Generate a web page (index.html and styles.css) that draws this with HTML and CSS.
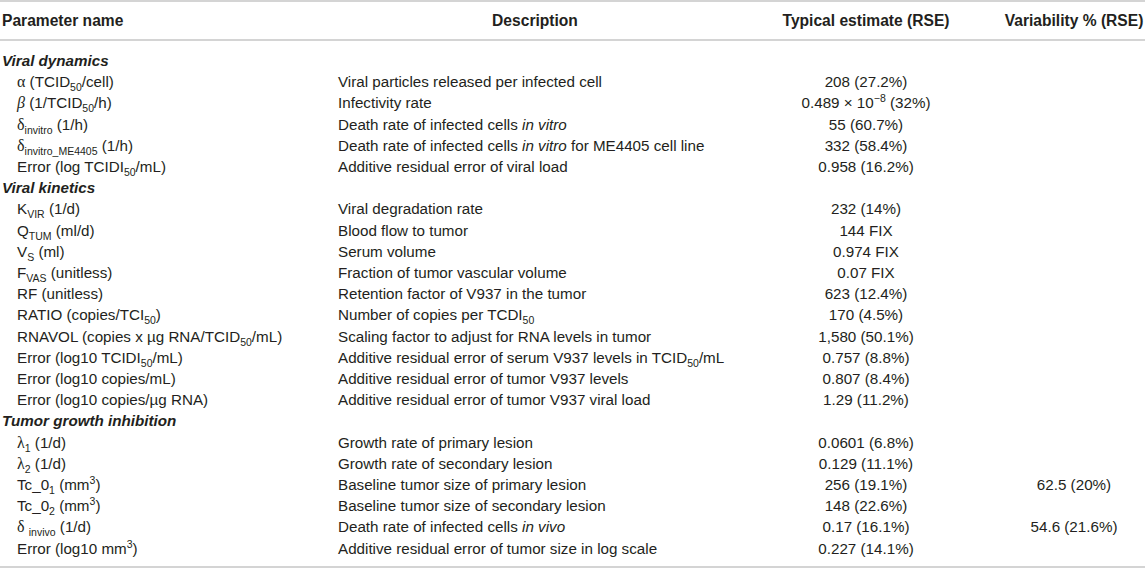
FILE: index.html
```html
<!DOCTYPE html>
<html lang="en">
<head>
    <meta charset="UTF-8">
    <title>Model parameter estimates</title>
    <link rel="stylesheet" href="styles.css">
</head>
<body>
    <table class="params">
        <colgroup>
            <col class="c-name">
            <col class="c-desc">
            <col class="c-est">
            <col class="c-var">
        </colgroup>
        <thead>
            <tr>
                <th class="h-name">Parameter name</th>
                <th class="h-desc">Description</th>
                <th class="h-est">Typical estimate (RSE)</th>
                <th class="h-var">Variability % (RSE)</th>
            </tr>
        </thead>
        <tbody>
            <tr class="gap"><td colspan="4"></td></tr>
            <tr class="section"><td colspan="4">Viral dynamics</td></tr>
            <tr>
                <td class="name"><span class="gr">α</span> (TCID<sub>50</sub>/cell)</td>
                <td>Viral particles released per infected cell</td>
                <td class="est">208 (27.2%)</td>
                <td class="var"></td>
            </tr>
            <tr>
                <td class="name"><i class="gr">β</i> (1/TCID<sub>50</sub>/h)</td>
                <td>Infectivity rate</td>
                <td class="est">0.489 × 10<sup>−8</sup> (32%)</td>
                <td class="var"></td>
            </tr>
            <tr>
                <td class="name"><span class="gr">δ</span><sub>invitro</sub> (1/h)</td>
                <td>Death rate of infected cells <i>in vitro</i></td>
                <td class="est">55 (60.7%)</td>
                <td class="var"></td>
            </tr>
            <tr>
                <td class="name"><span class="gr">δ</span><sub>invitro_ME4405</sub> (1/h)</td>
                <td>Death rate of infected cells <i>in vitro</i> for ME4405 cell line</td>
                <td class="est">332 (58.4%)</td>
                <td class="var"></td>
            </tr>
            <tr>
                <td class="name">Error (log TCIDI<sub>50</sub>/mL)</td>
                <td>Additive residual error of viral load</td>
                <td class="est">0.958 (16.2%)</td>
                <td class="var"></td>
            </tr>
            <tr class="section"><td colspan="4">Viral kinetics</td></tr>
            <tr>
                <td class="name">K<sub>VIR</sub> (1/d)</td>
                <td>Viral degradation rate</td>
                <td class="est">232 (14%)</td>
                <td class="var"></td>
            </tr>
            <tr>
                <td class="name">Q<sub>TUM</sub> (ml/d)</td>
                <td>Blood flow to tumor</td>
                <td class="est">144 FIX</td>
                <td class="var"></td>
            </tr>
            <tr>
                <td class="name">V<sub>S</sub> (ml)</td>
                <td>Serum volume</td>
                <td class="est">0.974 FIX</td>
                <td class="var"></td>
            </tr>
            <tr>
                <td class="name">F<sub>VAS</sub> (unitless)</td>
                <td>Fraction of tumor vascular volume</td>
                <td class="est">0.07 FIX</td>
                <td class="var"></td>
            </tr>
            <tr>
                <td class="name">RF (unitless)</td>
                <td>Retention factor of V937 in the tumor</td>
                <td class="est">623 (12.4%)</td>
                <td class="var"></td>
            </tr>
            <tr>
                <td class="name">RATIO (copies/TCI<sub>50</sub>)</td>
                <td>Number of copies per TCDI<sub>50</sub></td>
                <td class="est">170 (4.5%)</td>
                <td class="var"></td>
            </tr>
            <tr>
                <td class="name">RNAVOL (copies x µg RNA/TCID<sub>50</sub>/mL)</td>
                <td>Scaling factor to adjust for RNA levels in tumor</td>
                <td class="est">1,580 (50.1%)</td>
                <td class="var"></td>
            </tr>
            <tr>
                <td class="name">Error (log10 TCIDI<sub>50</sub>/mL)</td>
                <td>Additive residual error of serum V937 levels in TCID<sub>50</sub>/mL</td>
                <td class="est">0.757 (8.8%)</td>
                <td class="var"></td>
            </tr>
            <tr>
                <td class="name">Error (log10 copies/mL)</td>
                <td>Additive residual error of tumor V937 levels</td>
                <td class="est">0.807 (8.4%)</td>
                <td class="var"></td>
            </tr>
            <tr>
                <td class="name">Error (log10 copies/µg RNA)</td>
                <td>Additive residual error of tumor V937 viral load</td>
                <td class="est">1.29 (11.2%)</td>
                <td class="var"></td>
            </tr>
            <tr class="section"><td colspan="4">Tumor growth inhibition</td></tr>
            <tr>
                <td class="name"><span class="gr">λ</span><sub>1</sub> (1/d)</td>
                <td>Growth rate of primary lesion</td>
                <td class="est">0.0601 (6.8%)</td>
                <td class="var"></td>
            </tr>
            <tr>
                <td class="name"><span class="gr">λ</span><sub>2</sub> (1/d)</td>
                <td>Growth rate of secondary lesion</td>
                <td class="est">0.129 (11.1%)</td>
                <td class="var"></td>
            </tr>
            <tr>
                <td class="name">Tc_0<sub>1</sub> (mm<sup>3</sup>)</td>
                <td>Baseline tumor size of primary lesion</td>
                <td class="est">256 (19.1%)</td>
                <td class="var">62.5 (20%)</td>
            </tr>
            <tr>
                <td class="name">Tc_0<sub>2</sub> (mm<sup>3</sup>)</td>
                <td>Baseline tumor size of secondary lesion</td>
                <td class="est">148 (22.6%)</td>
                <td class="var"></td>
            </tr>
            <tr>
                <td class="name"><span class="gr">δ</span> <sub>invivo</sub> (1/d)</td>
                <td>Death rate of infected cells <i>in vivo</i></td>
                <td class="est">0.17 (16.1%)</td>
                <td class="var">54.6 (21.6%)</td>
            </tr>
            <tr>
                <td class="name">Error (log10 mm<sup>3</sup>)</td>
                <td>Additive residual error of tumor size in log scale</td>
                <td class="est">0.227 (14.1%)</td>
                <td class="var"></td>
            </tr>
            <tr class="gap-end"><td colspan="4"></td></tr>
        </tbody>
    </table>
</body>
</html>
```

FILE: styles.css
```css
/* Page */
body {
    margin: 0;
    background: #fff;
    font-family: "Liberation Sans", Arial, sans-serif;
    color: #231f20;
}

/* Table */
.params {
    width: 1145px;
    table-layout: fixed;
    border-collapse: collapse;
    font-size: 15.2px;
    border-top: 2px solid #d4d4d4;
    border-bottom: 2px solid #d4d4d4;
}

.c-name { width: 330px; }
.c-desc { width: 406px; }
.c-est  { width: 260px; }
.c-var  { width: 149px; }

.params th,
.params td {
    padding: 0;
    white-space: nowrap;
    height: 21.2px;
    line-height: 21.2px;
    vertical-align: middle;
}

/* Header */
.params thead th {
    height: 37px;
    font-size: 15.6px;
    font-weight: bold;
    border-bottom: 2px solid #d4d4d4;
}

.h-name { text-align: left; padding-left: 2px !important; }
.h-desc { text-align: center; padding-left: 4px !important; }
.h-est  { text-align: center; }
.h-var  { text-align: center; padding-left: 7px !important; }

.params tr.gap td { height: 9px; line-height: 9px; }
.params tr.gap-end td { height: 7px; line-height: 7px; }

/* Rows */
.section td {
    font-weight: bold;
    font-style: italic;
    padding-left: 2px;
}

.name { padding-left: 17px !important; }
.params td:nth-child(2) { padding-left: 8px; }
.est { text-align: center; }
.var { text-align: center; padding-left: 7px !important; }

/* Greek symbols are set in a serif face */
.gr {
    font-family: "Liberation Serif", "Times New Roman", serif;
    font-size: 16px;
}

sub, sup {
    font-size: 10.5px;
    line-height: 0;
}
```
